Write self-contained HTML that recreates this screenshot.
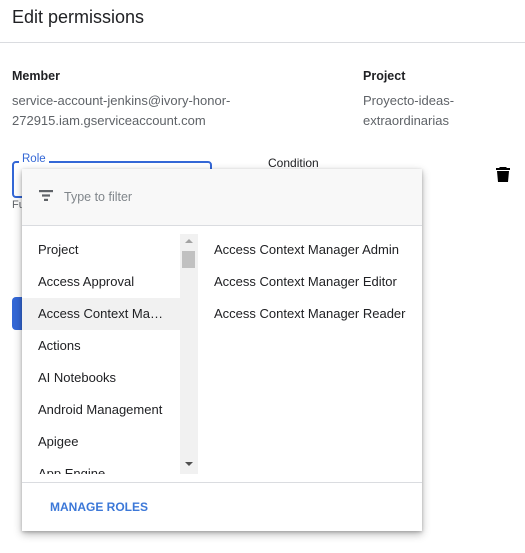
<!DOCTYPE html>
<html><head><style>
body{margin:0;width:525px;height:553px;background:#fff;font-family:"Liberation Sans",Arial,sans-serif;position:relative;overflow:hidden;color:#202124}
.a{position:absolute;white-space:nowrap}
.g{color:#5f6368;font-size:13px;line-height:20px}
.lb{font-size:12.5px;font-weight:bold;color:#202124}
.it{position:absolute;left:0;width:158px;height:32px;line-height:32px;padding-left:16px;font-size:13px;color:#202124;box-sizing:border-box}
.ri{position:absolute;left:192px;height:32px;line-height:32px;font-size:13px;color:#202124}
</style></head><body>
<div class="a" style="left:12px;top:7px;font-size:18px;color:#202124">Edit permissions</div>
<div class="a" style="left:0;top:42px;width:525px;height:1px;background:#dadce0"></div>
<div class="a lb" style="left:12px;top:69px">Member</div>
<div class="a g" style="left:12px;top:91px">service-account-jenkins@ivory-honor-<br>272915.iam.gserviceaccount.com</div>
<div class="a lb" style="left:363px;top:69px">Project</div>
<div class="a g" style="left:363px;top:91px">Proyecto-ideas-<br>extraordinarias</div>
<div class="a" style="left:12px;top:161px;width:196px;height:33px;border:2px solid #3367d6;border-radius:4px"></div>
<div class="a" style="left:19px;top:153px;background:#fff;padding:0 3px;font-size:11.5px;color:#3367d6">Role</div>
<div class="a" style="left:12px;top:199px;font-size:11px;color:#5f6368">Fu</div>
<div class="a" style="left:12px;top:297px;width:30px;height:33px;background:#3367d6;border-radius:4px"></div>
<div class="a" style="left:268px;top:156px;font-size:12px;color:#202124">Condition</div>
<svg class="a" style="left:496px;top:166px" width="14" height="16" viewBox="0 0 14 16"><path d="M4 1h6l1 1h3v2H0V2h3z M1 5h12l-1 11H2z" fill="#000"/></svg>

<div class="a" style="left:22px;top:169px;width:400px;height:362px;background:#fff;box-shadow:0 3px 8px rgba(0,0,0,.3),0 1px 3px rgba(0,0,0,.2)">
 <div class="a" style="left:0;top:0;width:400px;height:56px;background:#f8f8f8;border-bottom:1px solid #dadce0"></div>
 <svg class="a" style="left:17px;top:21px" width="14" height="11"><rect x="0" y="0" width="14" height="2.2" fill="#5f6368"/><rect x="3" y="4.4" width="8" height="2.2" fill="#5f6368"/><rect x="5" y="8.8" width="4" height="2.2" fill="#5f6368"/></svg>
 <div class="a" style="left:42px;top:21px;font-size:12.5px;color:#80868b">Type to filter</div>
 <div class="a" style="left:0;top:65px;width:400px;height:240px;overflow:hidden">
  <div class="it" style="top:0">Project</div>
  <div class="it" style="top:32px">Access Approval</div>
  <div class="it" style="top:64px;background:#f1f1f1">Access Context Ma…</div>
  <div class="it" style="top:96px">Actions</div>
  <div class="it" style="top:128px">AI Notebooks</div>
  <div class="it" style="top:160px">Android Management</div>
  <div class="it" style="top:192px">Apigee</div>
  <div class="it" style="top:224px">App Engine</div>
  <div class="a" style="left:158px;top:0;width:18px;height:240px;background:#f1f1f1"></div>
  <div class="a" style="left:163px;top:5px;width:0;height:0;border-left:4px solid transparent;border-right:4px solid transparent;border-bottom:4px solid #a3a3a3"></div>
  <div class="a" style="left:160px;top:17px;width:13px;height:17px;background:#c1c1c1"></div>
  <div class="a" style="left:163px;top:228px;width:0;height:0;border-left:4px solid transparent;border-right:4px solid transparent;border-top:4px solid #505050"></div>
  <div class="ri" style="top:0">Access Context Manager Admin</div>
  <div class="ri" style="top:32px">Access Context Manager Editor</div>
  <div class="ri" style="top:64px">Access Context Manager Reader</div>
 </div>
 <div class="a" style="left:0;top:313px;width:400px;height:1px;background:#dadce0"></div>
 <div class="a" style="left:28px;top:331px;font-size:12px;font-weight:bold;color:#3c78d8">MANAGE ROLES</div>
</div>
</body></html>
